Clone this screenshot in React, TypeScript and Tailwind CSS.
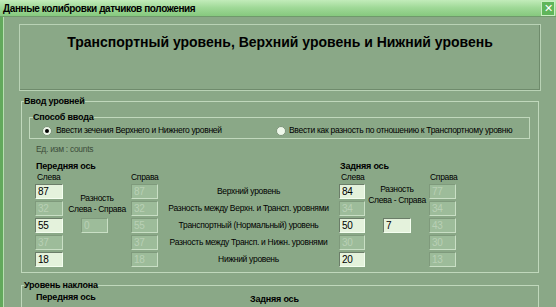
import React from 'react';

type Cell = { v: string; on?: boolean };

const front: { l: Cell; r: Cell }[] = [
  { l: { v: '87', on: true }, r: { v: '87' } },
  { l: { v: '32' }, r: { v: '32' } },
  { l: { v: '55', on: true }, r: { v: '55' } },
  { l: { v: '37' }, r: { v: '37' } },
  { l: { v: '18', on: true }, r: { v: '18' } },
];

const rear: { l: Cell; r: Cell }[] = [
  { l: { v: '84', on: true }, r: { v: '77' } },
  { l: { v: '34' }, r: { v: '34' } },
  { l: { v: '50', on: true }, r: { v: '43' } },
  { l: { v: '30' }, r: { v: '30' } },
  { l: { v: '20', on: true }, r: { v: '13' } },
];

const labels = [
  'Верхний уровень',
  'Разность между Верхн. и Трансп. уровнями',
  'Транспортный (Нормальный) уровень',
  'Разность между Трансп. и Нижн. уровнями',
  'Нижний уровень',
];

function Box({ v, on }: Cell) {
  return (
    <div
      className={
        'h-[15px] w-full border pl-[2px] text-[10px] leading-[13px] ' +
        (on
          ? 'border-t-[#6b7d69] border-l-[#6b7d69] border-b-[#f4fff0] border-r-[#f4fff0] bg-[#e4f2dc] text-black'
          : 'border-t-[#7f9a7c] border-l-[#7f9a7c] border-b-[#c9dfc5] border-r-[#c9dfc5] bg-[#9dbc9a] text-[#b9d0b5]')
      }
    >
      {v}
    </div>
  );
}

function Radio({ checked }: { checked?: boolean }) {
  return (
    <span className="flex h-[10px] w-[10px] shrink-0 items-center justify-center rounded-full border border-[#7d957a] bg-[#eef8ea]">
      {checked && <span className="h-[4px] w-[4px] rounded-full bg-black" />}
    </span>
  );
}

export default function App() {
  return (
    <div className="flex h-[307px] w-[556px] flex-col overflow-hidden bg-[#8aa887] font-['Liberation_Sans',Arial,sans-serif] text-black">
      {/* title bar */}
      <div className="flex h-[17px] items-center justify-between border-b border-[#6f9a6b] bg-gradient-to-b from-[#c2ecba] via-[#9ed896] to-[#86c97e] pl-[3px] pr-[1px]">
        <span className="text-[10px] font-semibold tracking-[-0.4px] text-black">Данные колибровки датчиков положения</span>
        <span className="flex h-[15px] w-[14px] items-center justify-center border border-[#c8efc2] bg-[#5fb55a] text-[11px] leading-none text-white">
          ✕
        </span>
      </div>

      <div className="flex min-h-0 flex-1">
        <div className="w-[4px] border-r border-[#b6e0b0] bg-[#62a95c]" />
        <div className="flex-1 pl-[15px] pr-[15px]">
          {/* header panel */}
          <div className="mt-[7px] h-[67px] border border-[#b9d2b5] shadow-[inset_-1px_-1px_0_#6f8b6c] pt-[9px] text-center text-[14px] font-bold leading-[17px]">
            Транспортный уровень, Верхний уровень и Нижний уровень
          </div>

          {/* levels group */}
          <fieldset className="mx-[2px] mt-[4px] h-[178px] border border-[#c0d8bc]">
            <legend className="ml-[2px] text-[9px] font-bold leading-[12px] tracking-[-0.2px]">Ввод уровней</legend>

            <fieldset className="ml-[7px] mr-[8px] mt-[5px] h-[27px] border border-[#c0d8bc]">
              <legend className="ml-[3px] text-[9px] font-bold leading-[11px] tracking-[-0.2px]">Способ ввода</legend>
              <div className="flex items-center pt-[2px] text-[8.5px] leading-[11px] tracking-[-0.3px]">
                <div className="flex w-[246px] items-center gap-[4px] pl-[12px]">
                  <Radio checked />
                  <span className="whitespace-nowrap">Ввести зечения Верхнего и Нижнего уровней</span>
                </div>
                <div className="flex items-center gap-[3px]">
                  <Radio />
                  <span className="whitespace-nowrap">Ввести как разность по отношению к Транспортному уровню</span>
                </div>
              </div>
            </fieldset>

            <div className="ml-[14px] mt-[5px] text-[8.5px] leading-[11px] tracking-[-0.3px] text-[#3d4d3b]">Ед. изм : counts</div>

            <div className="ml-[13px] mt-[6px]">
              <div className="flex text-[9px] font-bold leading-[11px] tracking-[-0.2px]">
                <span className="w-[305px] pl-[1px]">Передняя ось</span>
                <span>Задняя ось</span>
              </div>
              <div className="flex text-[8.5px] leading-[10px] tracking-[-0.3px]">
                <span className="w-[96px] pl-[2px]">Слева</span>
                <span className="w-[209px]">Справа</span>
                <span className="w-[90px] pl-[1px]">Слева</span>
                <span>Справа</span>
              </div>

              <div className="mt-[2px] grid grid-cols-[28px_68px_27px_181px_26px_64px_27px] grid-rows-[15px_15px_15px_15px_15px] gap-y-[2px] text-[8.5px] leading-[11px] tracking-[-0.3px]">
                {front.map((r, i) => (
                  <div key={'fl' + i} className="col-start-1" style={{ gridRow: i + 1 }}>
                    <Box {...r.l} />
                  </div>
                ))}
                <div className="col-start-2 row-span-2 row-start-1 flex flex-col items-center justify-end whitespace-nowrap pb-[1px]">
                  <span>Разность</span>
                  <span>Слева - Справа</span>
                </div>
                <div className="col-start-2 row-start-3 pl-[18px] pr-[23px]">
                  <Box v="0" />
                </div>
                {front.map((r, i) => (
                  <div key={'fr' + i} className="col-start-3" style={{ gridRow: i + 1 }}>
                    <Box {...r.r} />
                  </div>
                ))}
                {labels.map((t, i) => (
                  <div
                    key={'lb' + i}
                    className="col-start-4 flex items-center justify-center whitespace-nowrap"
                    style={{ gridRow: i + 1 }}
                  >
                    {t}
                  </div>
                ))}
                {rear.map((r, i) => (
                  <div key={'rl' + i} className="col-start-5" style={{ gridRow: i + 1 }}>
                    <Box {...r.l} />
                  </div>
                ))}
                <div className="col-start-6 row-span-2 row-start-1 flex flex-col items-center whitespace-nowrap">
                  <span>Разность</span>
                  <span>Слева - Справа</span>
                </div>
                <div className="col-start-6 row-start-3 pl-[18px] pr-[18px]">
                  <Box v="7" on />
                </div>
                {rear.map((r, i) => (
                  <div key={'rr' + i} className="col-start-7" style={{ gridRow: i + 1 }}>
                    <Box {...r.r} />
                  </div>
                ))}
              </div>
            </div>
          </fieldset>

          {/* tilt group */}
          <fieldset className="mx-[2px] mt-[6px] h-[60px] border border-[#c0d8bc]">
            <legend className="ml-[2px] text-[9px] font-bold leading-[12px] tracking-[-0.2px]">Уровень наклона</legend>
            <div className="flex text-[9px] font-bold leading-[11px] tracking-[-0.2px]">
              <span className="ml-[14px] w-[214px] pt-[1px]">Передняя ось</span>
              <span className="pt-[3px]">Задняя ось</span>
            </div>
          </fieldset>
        </div>
      </div>
    </div>
  );
}
